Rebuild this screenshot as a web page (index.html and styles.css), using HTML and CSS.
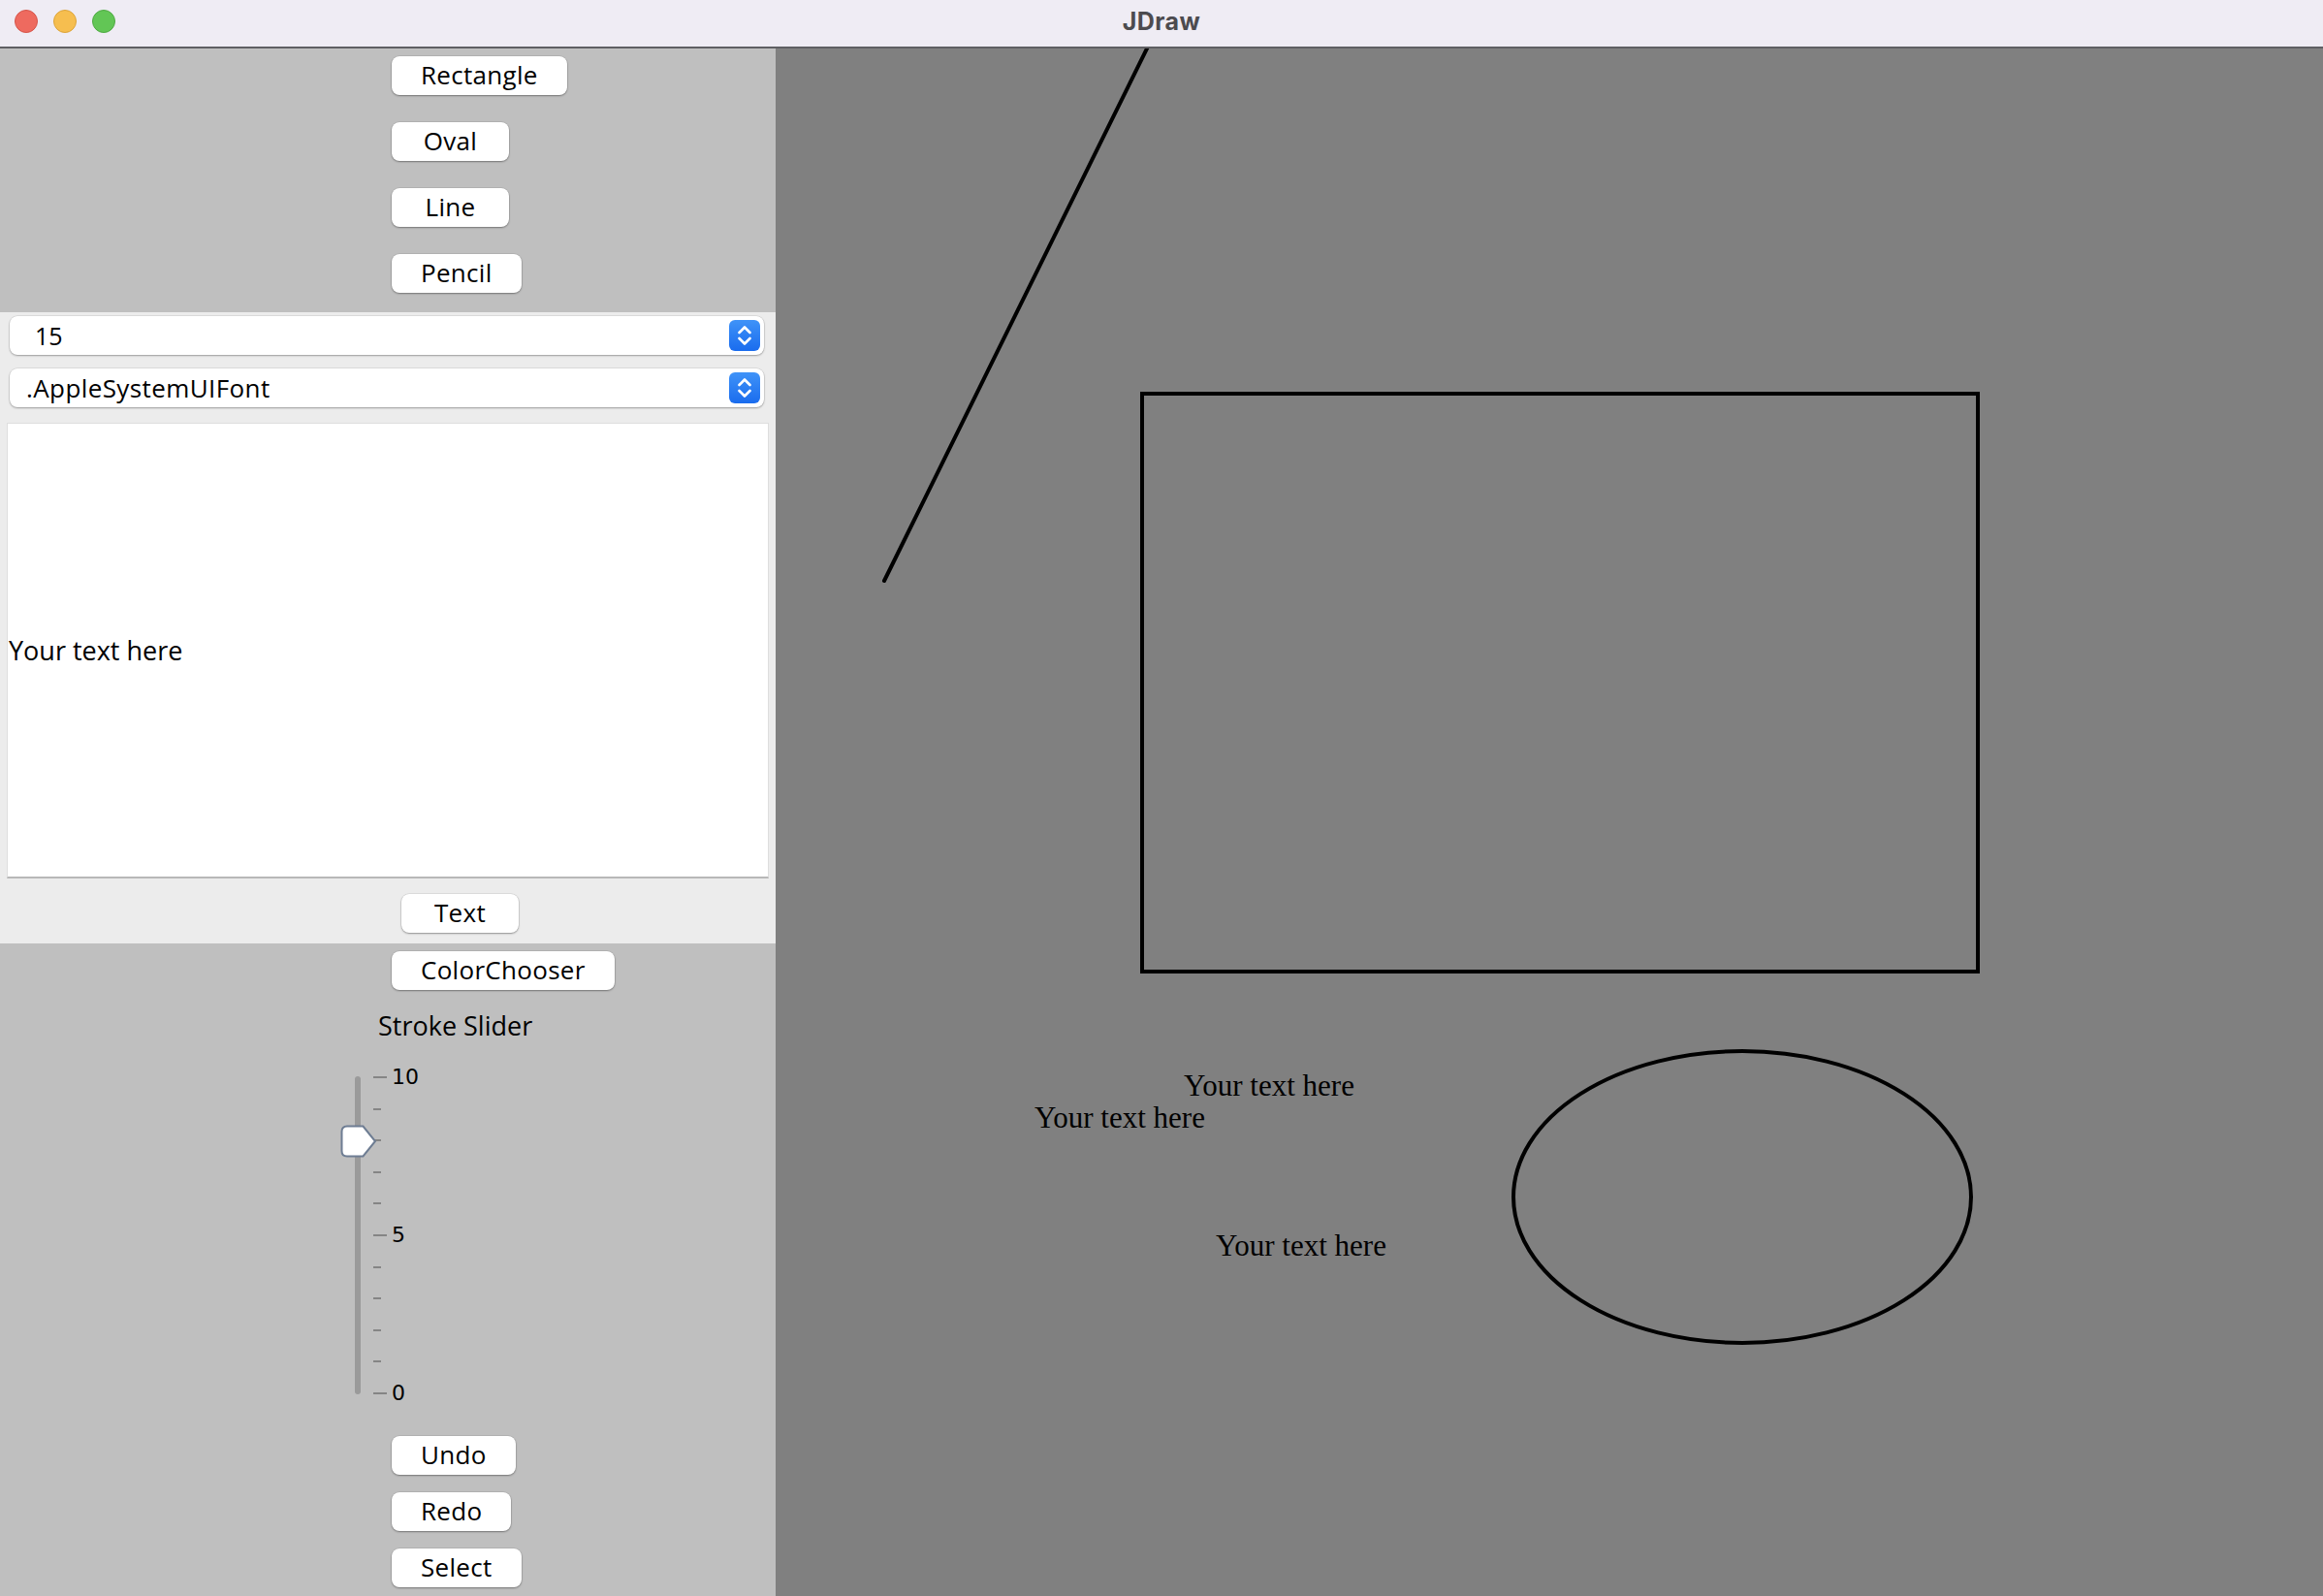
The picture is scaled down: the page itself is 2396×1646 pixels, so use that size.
FILE: index.html
```html
<!DOCTYPE html>
<html>
<head>
<meta charset="utf-8">
<title>JDraw</title>
<link rel="stylesheet" href="styles.css">
</head>
<body>
<div class="window">
  <header class="titlebar">
    <div class="lights">
      <span class="light red"></span>
      <span class="light yellow"></span>
      <span class="light green"></span>
    </div>
    <div class="title">JDraw</div>
  </header>
  <div class="main">
    <aside class="sidebar">
      <section class="tools">
        <button class="btn">Rectangle</button>
        <button class="btn">Oval</button>
        <button class="btn">Line</button>
        <button class="btn">Pencil</button>
      </section>
      <section class="textpanel">
        <div class="combo">
          <span class="combo-value num">15</span>
          <span class="combo-arrow">
            <svg width="32" height="32" viewBox="0 0 32 32"><path d="M10.5 13 L16 7.5 L21.5 13 M10.5 19 L16 24.5 L21.5 19" fill="none" stroke="#fff" stroke-width="2.6" stroke-linecap="round" stroke-linejoin="round"/></svg>
          </span>
        </div>
        <div class="combo second">
          <span class="combo-value">.AppleSystemUIFont</span>
          <span class="combo-arrow">
            <svg width="32" height="32" viewBox="0 0 32 32"><path d="M10.5 13 L16 7.5 L21.5 13 M10.5 19 L16 24.5 L21.5 19" fill="none" stroke="#fff" stroke-width="2.6" stroke-linecap="round" stroke-linejoin="round"/></svg>
          </span>
        </div>
        <div class="textarea">Your text here</div>
        <button class="btn btn-text">Text</button>
      </section>
      <section class="lower">
        <button class="btn">ColorChooser</button>
        <div class="slider-label">Stroke Slider</div>
        <div class="slider">
          <div class="track"></div>
          <div class="ticks">
            <div class="tick major"><span class="tl"></span><span class="tlabel">10</span></div>
            <div class="tick"><span class="tl"></span></div>
            <div class="tick"><span class="tl"></span></div>
            <div class="tick"><span class="tl"></span></div>
            <div class="tick"><span class="tl"></span></div>
            <div class="tick major"><span class="tl"></span><span class="tlabel">5</span></div>
            <div class="tick"><span class="tl"></span></div>
            <div class="tick"><span class="tl"></span></div>
            <div class="tick"><span class="tl"></span></div>
            <div class="tick"><span class="tl"></span></div>
            <div class="tick major"><span class="tl"></span><span class="tlabel">0</span></div>
          </div>
          <svg class="thumb" width="38" height="34" viewBox="0 0 38 34"><path d="M7 1.5 H23.5 L36 17 L23.5 32.5 H7 Q1.5 32.5 1.5 27 V7 Q1.5 1.5 7 1.5 Z" fill="#fff" stroke="#6e7d93" stroke-width="2"/></svg>
        </div>
        <button class="btn btn-undo">Undo</button>
        <button class="btn btn-stack">Redo</button>
        <button class="btn btn-stack">Select</button>
      </section>
    </aside>
    <main class="canvas">
      <svg class="drawing" width="1596" height="1596" viewBox="0 0 1596 1596">
        <line x1="384" y1="-2" x2="112" y2="549" stroke="#000" stroke-width="4" stroke-linecap="round"/>
        <rect x="378" y="356" width="862" height="596" fill="none" stroke="#000" stroke-width="4"/>
        <ellipse cx="997" cy="1184.5" rx="236" ry="150.5" fill="none" stroke="#000" stroke-width="4"/>
        <text class="ctext" x="421" y="1080">Your text here</text>
        <text class="ctext" x="267" y="1113">Your text here</text>
        <text class="ctext" x="454" y="1245">Your text here</text>
      </svg>
    </main>
  </div>
</div>
</body>
</html>
```

FILE: styles.css
```css
* { box-sizing: border-box; }
html, body {
  margin: 0;
  padding: 0;
}
body {
  width: 2396px;
  height: 1646px;
  overflow: hidden;
  font-family: "Open Sans", "DejaVu Sans", sans-serif;
  background: #808080;
}
.window {
  display: flex;
  flex-direction: column;
  width: 2396px;
  height: 1646px;
}
.titlebar {
  position: relative;
  height: 50px;
  flex: 0 0 50px;
  background: #efecf4;
  border-bottom: 2px solid #5f5f63;
  display: flex;
  align-items: center;
  justify-content: center;
}
.lights {
  position: absolute;
  left: 15px;
  top: 10px;
  display: flex;
  gap: 16px;
}
.light {
  width: 24px;
  height: 24px;
  border-radius: 50%;
  display: block;
}
.red { background: #ee6a5f; border: 1px solid #d5554a; }
.yellow { background: #f6be4f; border: 1px solid #dca43a; }
.green { background: #62c655; border: 1px solid #4faa43; }
.title {
  font-family: Inter, "Open Sans", sans-serif;
  font-weight: 700;
  font-size: 25px;
  color: #4c4b4f;
  letter-spacing: 0.4px;
  margin-top: -4px;
}
.main {
  flex: 1;
  display: flex;
  min-height: 0;
}
.sidebar {
  width: 800px;
  flex: 0 0 800px;
  display: flex;
  flex-direction: column;
}
.btn {
  display: block;
  height: 40px;
  min-width: 121px;
  padding: 0 30px 2px;
  border: none;
  border-radius: 8px;
  background: #fff;
  box-shadow: 0 0 0 0.5px rgba(0,0,0,0.12), 0 1px 2px rgba(0,0,0,0.35);
  font-family: "Open Sans", sans-serif;
  font-size: 26px;
  line-height: 38px;
  letter-spacing: 0.3px;
  color: #000;
  text-align: center;
  margin-left: 404px;
  white-space: nowrap;
}
.tools {
  height: 272px;
  flex: 0 0 272px;
  background: #bfbfbf;
  padding-top: 8px;
  display: flex;
  flex-direction: column;
  align-items: flex-start;
  gap: 28px;
}
.textpanel {
  height: 651px;
  flex: 0 0 651px;
  background: #ececec;
  display: flex;
  flex-direction: column;
  padding-top: 4px;
}
.combo {
  height: 40px;
  margin: 0 12px 0 10px;
  background: #fff;
  border-radius: 8px;
  box-shadow: 0 0 0 0.5px rgba(0,0,0,0.12), 0 1px 2px rgba(0,0,0,0.3);
  display: flex;
  align-items: center;
  justify-content: space-between;
  padding: 0 4px 0 17px;
}
.combo.second {
  margin-top: 14px;
}
.combo-value {
  font-size: 26px;
  letter-spacing: 0.4px;
  color: #000;
  line-height: 40px;
}
.combo-value.num {
  font-size: 25px;
  letter-spacing: 0;
  padding-left: 9px;
}
.combo-arrow {
  width: 32px;
  height: 32px;
  border-radius: 6px;
  background: linear-gradient(#3f93f8, #1a6cee);
  display: block;
}
.combo-arrow svg { display: block; }
.textarea {
  margin: 16px 7px 0 7px;
  height: 470px;
  background: #fff;
  border: 1px solid #dedede;
  border-bottom: 2px solid #b8b8b8;
  display: flex;
  align-items: center;
  padding-left: 1px;
  font-size: 27px;
  color: #000;
}
.btn-text {
  margin-top: 16px;
  margin-left: 414px;
  align-self: flex-start;
}
.lower {
  flex: 1;
  background: #bfbfbf;
  display: flex;
  flex-direction: column;
  align-items: flex-start;
  padding-top: 8px;
}
.slider-label {
  margin-left: 390px;
  margin-top: 24px;
  font-size: 27px;
  line-height: 26px;
  color: #000;
}
.slider {
  position: relative;
  display: flex;
  margin-left: 366px;
  margin-top: 39px;
  height: 328px;
}
.track {
  width: 6px;
  background: #9a9a9a;
  border-radius: 3px;
}
.ticks {
  margin-left: 13px;
  display: flex;
  flex-direction: column;
  justify-content: space-between;
}
.tick {
  height: 2px;
  display: flex;
  align-items: center;
}
.tl {
  display: block;
  width: 8px;
  height: 2px;
  background: #858585;
}
.tick.major .tl {
  width: 14px;
}
.tlabel {
  margin-left: 5px;
  font-family: "DejaVu Sans", sans-serif;
  font-size: 22px;
  line-height: 22px;
  color: #000;
}
.thumb {
  position: absolute;
  left: -15px;
  top: 50px;
}
.btn-undo {
  margin-top: 43px;
}
.btn-stack {
  margin-top: 18px;
}
.canvas {
  flex: 1;
  background: #808080;
  overflow: hidden;
}
.drawing {
  display: block;
}
.ctext {
  font-family: "Liberation Serif", "Times New Roman", serif;
  font-size: 31px;
  fill: #000;
}
```
